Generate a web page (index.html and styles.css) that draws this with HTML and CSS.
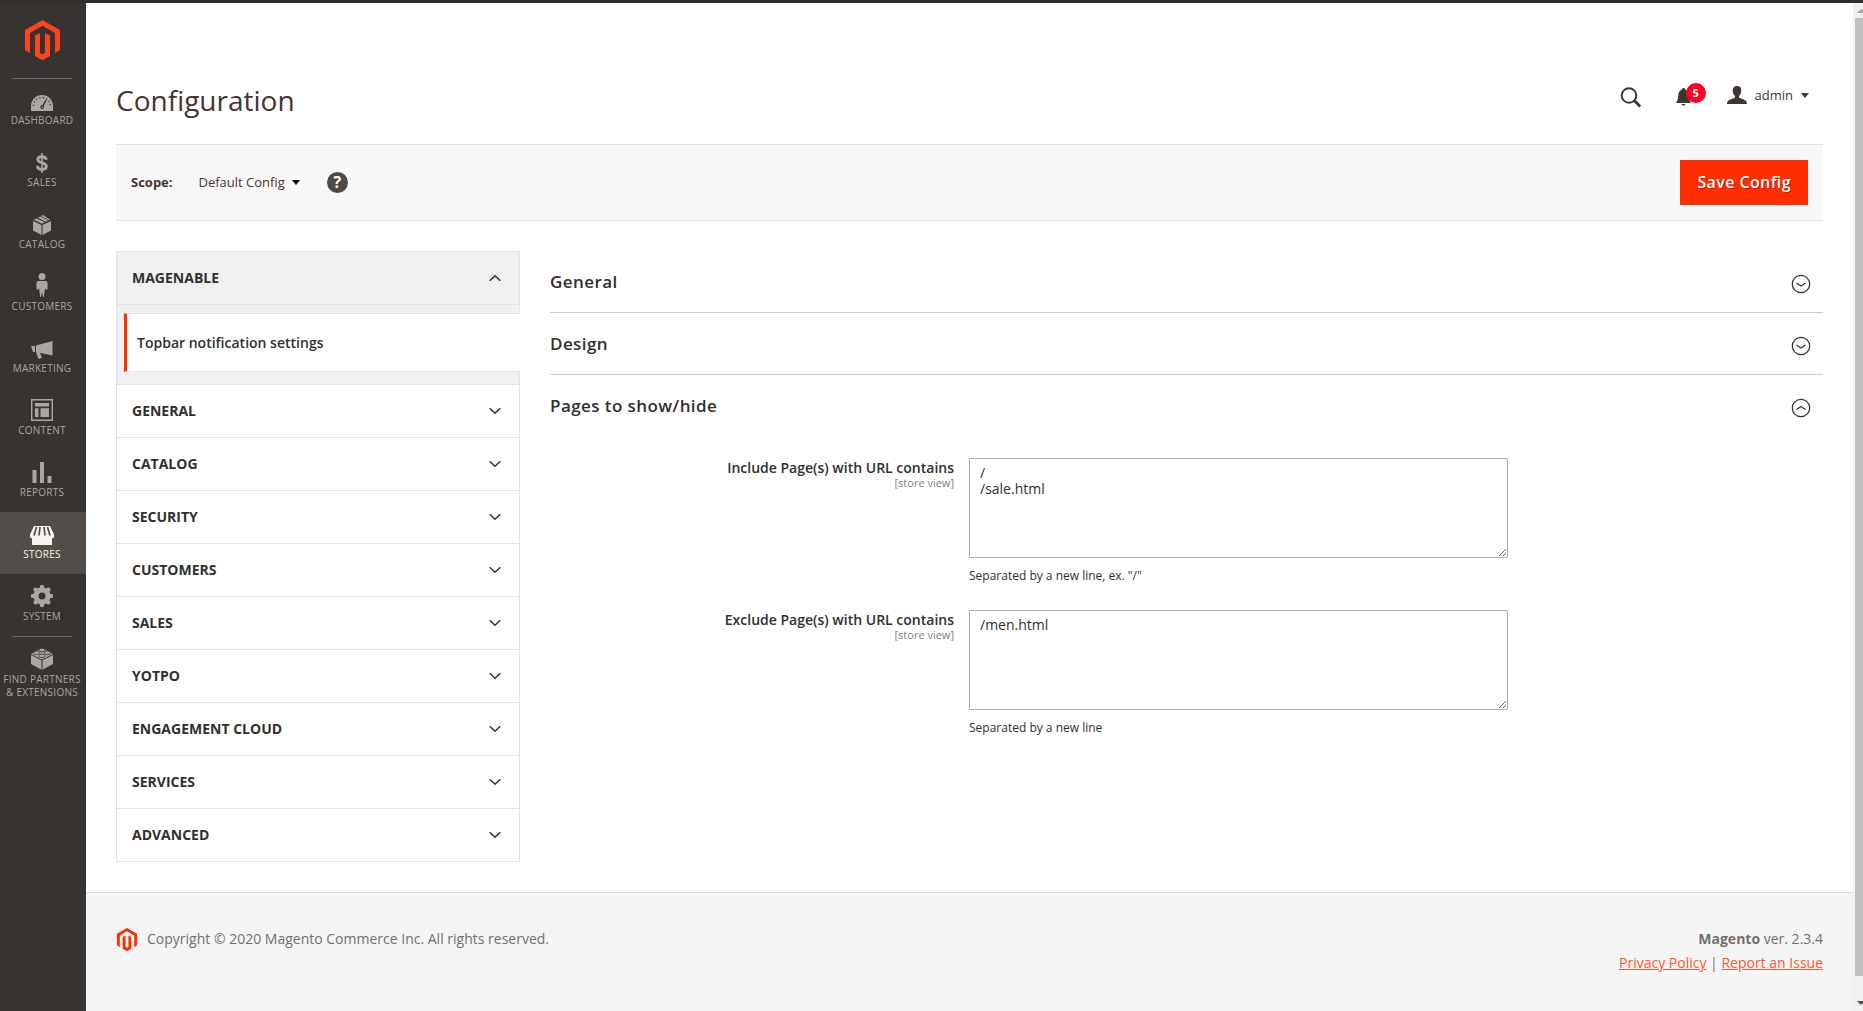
FILE: index.html
```html
<!DOCTYPE html>
<html lang="en">
<head>
<meta charset="utf-8">
<meta name="viewport" content="width=device-width, initial-scale=1">
<title>Configuration / Magento Admin</title>
<link rel="stylesheet" href="styles.css">
</head>
<body>
<svg class="sprite" aria-hidden="true">
  <symbol id="logo" viewBox="0 0 35 40"><path d="M17.5 0 35 10v20l-5 3V13L17.500 5.800 5 13v20l-5-3V10z"/><path d="M10 15.500 15 13v20l2.500 1.500L20 33V13l5 2.500V36l-7.500 4.300L10 36z"/></symbol>
  <symbol id="down" viewBox="0 0 12 6"><path d="M.7.300 6 5.200 11.300.300" fill="none" stroke="currentColor" stroke-width="1.500"/></symbol>
  <symbol id="up" viewBox="0 0 12 6"><path d="M.7 5.700 6 .8l5.300 4.900" fill="none" stroke="currentColor" stroke-width="1.500"/></symbol>
  <symbol id="circle-down" viewBox="0 0 20 20"><g fill="none" stroke="currentColor" stroke-width="1.200"><circle cx="10" cy="10" r="8.700"/><path d="M5.500 9 10 12l4.500-3"/></g></symbol>
  <symbol id="circle-up" viewBox="0 0 20 20"><g fill="none" stroke="currentColor" stroke-width="1.200"><circle cx="10" cy="10" r="8.700"/><path d="M5.500 11.500 10 8.500l4.500 3"/></g></symbol>
</svg>
<div class="app">
  <nav class="menu" aria-label="Main">
    <a class="menu-logo" href="#" aria-label="Magento"><svg width="35" height="40"><use href="#logo"/></svg></a>
    <ul class="menu-list">
      <li><a href="#"><svg width="22" height="16" viewBox="0 0 22 16"><path d="M0 16v-5a11 11 0 0 1 22 0v5z" fill="currentColor"/><g fill="none" stroke="#373330"><path d="M2.500 11a8.500 8.500 0 0 1 17 0" stroke-width="1.400" stroke-dasharray="1.300 2.200"/><path d="m11.500 12 3.500-7" stroke-width="1.500"/></g><circle cx="11.200" cy="12" r="1.900" fill="#373330"/><circle cx="11.200" cy="12" r=".7" fill="currentColor"/></svg><span>Dashboard</span></a></li>
      <li><a href="#"><svg width="12" height="20" viewBox="0 0 12 20"><g fill="none" stroke="currentColor"><path d="M10.300 6.800C10 4.800 8.500 3.700 6 3.700c-2.500 0-4.200 1-4.200 2.900 0 4.200 8.500 2.200 8.500 6.700 0 2-1.800 3.200-4.300 3.200-2.600 0-4.400-1.200-4.600-3.500" stroke-width="2.900"/><path d="M6 0v20" stroke-width="1.600"/></g></svg><span>Sales</span></a></li>
      <li><a href="#"><svg width="18" height="20" viewBox="0 0 18 20"><g fill="currentColor"><path d="m0 6 8.500 4v10L0 15.500zM9.500 10 18 6v9.500L9.500 20zM.8 4.800l2.800-1.400 8.300 3.900L9 8.800zM4.800 2.800 7.300 1.600l8 4-2.300 1.200zM8 1l2-1 7.200 4.800-1 .4z"/></g></svg><span>Catalog</span></a></li>
      <li><a href="#"><svg width="12" height="24" viewBox="0 0 12 24"><g fill="currentColor"><circle cx="6" cy="3.500" r="3.500"/><path d="M2.500 8h7C11 8 11.500 9 11.500 10.500V16L10 17l-1-2-1.200 9H7l-1-5-1 5h-.8L3 15l-1 2-1.500-1v-5.500C.5 9 1 8 2.500 8z"/></g></svg><span>Customers</span></a></li>
      <li><a href="#"><svg width="22" height="18" viewBox="0 0 22 18"><path d="M21.500 0v14.500L11 12.200 9 12l2 5-3.500 1L5 11V4.500zM0 5h4v6H2z" fill="currentColor"/></svg><span>Marketing</span></a></li>
      <li><a href="#"><svg width="22" height="22" viewBox="0 0 22 22"><path d="M.7.700h20.600v20.600H.7z" fill="none" stroke="currentColor" stroke-width="1.400"/><path d="M4 4h14v3.500H4zM4 9.300h3.500V18H4zM9.500 9.300H18V18H9.500z" fill="currentColor"/></svg><span>Content</span></a></li>
      <li><a href="#"><svg width="20" height="21" viewBox="0 0 20 21"><path d="M.5 8h4v13h-4zM8 0h4v21H8zM15.500 14h4v7h-4z" fill="currentColor"/></svg><span>Reports</span></a></li>
      <li><a class="current" href="#"><svg width="24" height="19" viewBox="0 0 24 19"><path d="M2 10h20v9H2z" fill="currentColor"/><path d="M4 0h16l4 8.500A2.500 2.500 0 0 1 19.500 11h-15A2.500 2.500 0 0 1 0 8.500z" fill="currentColor"/><path d="M6.500 1 4 9.500M10 1 9 9.500M14 1l1 8.500M17.500 1 20 9.500" stroke="#524d49" stroke-width="1.700"/></svg><span>Stores</span></a></li>
      <li><a href="#"><svg width="22" height="22" viewBox="-11 -11 22 22"><circle r="6" fill="none" stroke="currentColor" stroke-width="5"/><g fill="currentColor"><path id="tooth" d="M-2.600-7.500-1.500-11h3L2.600-7.500z"/><use href="#tooth" transform="rotate(45)"/><use href="#tooth" transform="rotate(90)"/><use href="#tooth" transform="rotate(135)"/><use href="#tooth" transform="rotate(180)"/><use href="#tooth" transform="rotate(225)"/><use href="#tooth" transform="rotate(270)"/><use href="#tooth" transform="rotate(315)"/></g></svg><span>System</span></a></li>
      <li class="partners"><a href="#"><svg width="22" height="23" viewBox="0 0 22 23"><path d="M0 7 11 1l11 6v10l-11 6-11-6z" fill="currentColor"/><path d="m0 7.500 11 5.500 11-5.500M11 13v10" fill="none" stroke="#373330"/><g fill="currentColor" stroke="#373330" stroke-width=".8"><ellipse cx="11" cy="3" rx="3" ry="1.800"/><ellipse cx="5.500" cy="5.800" rx="3" ry="1.800"/><ellipse cx="16.500" cy="5.800" rx="3" ry="1.800"/><ellipse cx="11" cy="8.800" rx="3" ry="1.800"/></g></svg><span>Find Partners<br>&amp; Extensions</span></a></li>
    </ul>
  </nav>

  <div class="page">
    <header class="page-header">
      <h1>Configuration</h1>
      <div class="header-tools">
        <button class="tool search" aria-label="Search"><svg width="22" height="21" viewBox="0 0 22 21"><g fill="none" stroke="currentColor"><circle cx="9" cy="8.500" r="7.300" stroke-width="2"/><path d="m14.200 13.500 6 6" stroke-width="2.800"/></g></svg></button>
        <button class="tool bell" aria-label="Notifications"><svg width="15" height="18" viewBox="0 0 15 18"><path d="M7.500 0C9 0 9 1 9 1.600c2.800.9 3.600 3 3.800 6.400.2 4 1.200 5 2.200 7H0c1-2 2-3 2.200-7C2.400 4.600 3.200 2.500 6 1.600 6 1 6 0 7.500 0zM5.500 16h4c-.3 2-3.700 2-4 0z" fill="currentColor"/></svg><span class="badge">5</span></button>
        <button class="tool user"><svg width="20" height="18" viewBox="0 0 20 18"><path d="M10 0c3 0 4.500 1.800 4.200 5-.2 2.400-1 4-2.200 5v1.500c2 1.500 8 1.500 8 6.500H0c0-5 6-5 8-6.500V10C6.800 9 6 7.400 5.800 5 5.500 1.800 7 0 10 0z" fill="currentColor"/></svg><span>admin</span><span class="caret"></span></button>
      </div>
    </header>

    <div class="toolbar">
      <strong>Scope:</strong>
      <button class="scope">Default Config<span class="caret"></span></button>
      <button class="help" aria-label="What is this?">?</button>
      <button class="save">Save Config</button>
    </div>

    <div class="columns">
      <nav class="tabs" aria-label="Configuration sections">
        <section class="tab-open">
          <button class="tab">Magenable<svg width="12" height="6"><use href="#up"/></svg></button>
          <a class="tab-item" href="#">Topbar notification settings</a>
        </section>
        <button class="tab">General<svg width="12" height="6"><use href="#down"/></svg></button>
        <button class="tab">Catalog<svg width="12" height="6"><use href="#down"/></svg></button>
        <button class="tab">Security<svg width="12" height="6"><use href="#down"/></svg></button>
        <button class="tab">Customers<svg width="12" height="6"><use href="#down"/></svg></button>
        <button class="tab">Sales<svg width="12" height="6"><use href="#down"/></svg></button>
        <button class="tab">Yotpo<svg width="12" height="6"><use href="#down"/></svg></button>
        <button class="tab">Engagement Cloud<svg width="12" height="6"><use href="#down"/></svg></button>
        <button class="tab">Services<svg width="12" height="6"><use href="#down"/></svg></button>
        <button class="tab">Advanced<svg width="12" height="6"><use href="#down"/></svg></button>
      </nav>

      <main class="sections">
        <button class="section-title">General<svg width="20" height="20"><use href="#circle-down"/></svg></button>
        <button class="section-title">Design<svg width="20" height="20"><use href="#circle-down"/></svg></button>
        <button class="section-title open">Pages to show/hide<svg width="20" height="20"><use href="#circle-up"/></svg></button>
        <form class="fields">
          <div class="field">
            <label for="include">Include Page(s) with URL contains<span>[store view]</span></label>
            <div class="control">
              <textarea id="include" rows="5">/
/sale.html</textarea>
              <p>Separated by a new line, ex. "/"</p>
            </div>
          </div>
          <div class="field">
            <label for="exclude">Exclude Page(s) with URL contains<span>[store view]</span></label>
            <div class="control">
              <textarea id="exclude" rows="5">/men.html</textarea>
              <p>Separated by a new line</p>
            </div>
          </div>
        </form>
      </main>
    </div>

    <footer class="footer">
      <p class="copyright"><svg width="22" height="23"><use href="#logo"/></svg>Copyright © 2020 Magento Commerce Inc. All rights reserved.</p>
      <div class="legal">
        <p><strong>Magento</strong> ver. 2.3.4</p>
        <p><a href="#">Privacy Policy</a> | <a href="#">Report an Issue</a></p>
      </div>
    </footer>
  </div>
  <div class="scrollbar" aria-hidden="true"><span class="arrow-up"></span><span class="thumb"></span><span class="arrow-down"></span></div>
</div>
</body>
</html>
```
FILE: styles.css
```css
* { box-sizing: border-box; }

body {
  margin: 0;
  font: 14px/19px "Open Sans", "Noto Sans", sans-serif;
  color: #303030;
  background: #fff;
}

h1, p, ul { margin: 0; padding: 0; }
ul { list-style: none; }

button {
  margin: 0;
  padding: 0;
  border: 0;
  background: none;
  font: inherit;
  color: inherit;
  cursor: pointer;
}

svg { display: block; flex: none; }
.sprite { position: absolute; width: 0; height: 0; }

.app {
  display: flex;
  min-height: 100vh;
  border-top: 3px solid #2f2f2f;
}

/* Main menu */
.menu {
  flex: 0 0 86px;
  background: #373330;
}

.menu-logo {
  display: flex;
  justify-content: center;
  height: 75px;
  padding: 17px 1px 0 0;
  color: #ff431c;
  fill: currentColor;
}

.menu-list::before,
.partners::before {
  content: "";
  display: block;
  height: 1px;
  margin: 0 14px 0 12px;
  background: #736963;
}

.menu-list::before { margin-bottom: -1px; }

.menu-list a {
  display: flex;
  flex-direction: column;
  align-items: center;
  justify-content: flex-end;
  height: 62px;
  padding: 0 2px 13px 0;
  color: #aaa6a0;
  font-size: 10px;
  letter-spacing: .025em;
  line-height: 13px;
  text-align: center;
  text-decoration: none;
  text-transform: uppercase;
  white-space: nowrap;
}

.menu-list svg { margin-bottom: 3px; }
.menu-list a.current { background: #524d49; color: #f7f3eb; }
.menu-list .partners a { height: 66px; padding-bottom: 4px; }

/* Page */
.page {
  flex: 1;
  display: flex;
  flex-direction: column;
  min-width: 0;
}

.page-header {
  display: flex;
  justify-content: space-between;
  align-items: flex-end;
  height: 141px;
  padding: 0 44px 0 30px;
}

h1 {
  padding-bottom: 25px;
  font-size: 28px;
  font-weight: 400;
  line-height: 38px;
  color: #41362f;
}

.header-tools {
  display: flex;
  align-items: center;
  height: 38px;
  margin-bottom: 30px;
  color: #41362f;
}

.tool { display: flex; align-items: center; }

.search { margin-top: 4px; }
.bell { position: relative; margin: 4px 36px 0 34px; }

.badge {
  position: absolute;
  top: -5px;
  left: 10px;
  width: 20px;
  border-radius: 10px;
  background: #ff0023;
  color: #fff;
  font-size: 11px;
  font-weight: 700;
  line-height: 20px;
}

.user { gap: 8px; font-size: 13px; }

.caret {
  border: 4px solid transparent;
  border-top: 5px solid currentColor;
  border-bottom: 0;
}

.toolbar {
  display: flex;
  align-items: center;
  height: 77px;
  margin: 0 30px;
  padding: 0 15px;
  border: solid #e3e3e3;
  border-width: 1px 0;
  background: #f8f8f8;
  font-size: 13px;
  color: #41362f;
}

.scope {
  display: flex;
  align-items: center;
  gap: 7px;
  margin: 0 27px 0 26px;
}

.scope .caret { color: #000; }

.help {
  width: 21px;
  height: 21px;
  border-radius: 50%;
  background: #514943;
  color: #fff;
  font-size: 16px;
  font-weight: 700;
  line-height: 21px;
}

.save {
  height: 45px;
  margin-left: auto;
  padding: 0 17px;
  background: #ff2d00;
  color: #fff;
  font-size: 16px;
  font-weight: 600;
  letter-spacing: .025em;
  text-shadow: 1px 1px 0 rgba(0, 0, 0, .25);
}

.columns {
  display: flex;
  gap: 30px;
  padding: 30px;
}

/* Section tabs */
.tabs {
  flex: 0 0 404px;
  border: solid #e3e3e3;
  border-width: 0 0 1px 1px;
}

.tab {
  display: flex;
  justify-content: space-between;
  align-items: center;
  width: 100%;
  height: 53px;
  padding: 0 18px 2px 15px;
  border: solid #e3e3e3;
  border-width: 1px 1px 0 0;
  font-weight: 700;
  text-transform: uppercase;
}

.tab svg { margin-top: 2px; }

.tab-open {
  padding-bottom: 12px;
  border-right: 1px solid #e3e3e3;
  background: #f0f0f0;
}

.tab-open .tab {
  margin-bottom: 9px;
  border-right: 0;
  box-shadow: 0 1px #e3e3e3;
}

.tab-item {
  display: block;
  margin: 0 -1px 0 7px;
  padding: 19px 10px;
  border: solid #e3e3e3;
  border-width: 1px 0;
  border-left: 3px solid #ff2d00;
  background: #fff;
  color: #303030;
  font-weight: 600;
  text-decoration: none;
}

/* Settings */
.sections { flex: 1; min-width: 0; }

.section-title {
  display: flex;
  justify-content: space-between;
  align-items: center;
  width: 100%;
  height: 62px;
  padding: 0 12px 0 0;
  border-bottom: 1px solid #ccc;
  font-size: 17px;
  font-weight: 600;
  letter-spacing: .025em;
}

.section-title svg { margin-top: 4px; }
.section-title.open { border-color: transparent; }

.fields {
  display: grid;
  gap: 25px;
  padding-top: 21px;
}

.field {
  display: grid;
  grid-template-columns: 404px minmax(0, 539px);
  gap: 15px;
}

.field label {
  font-weight: 600;
  text-align: right;
}

.field label span {
  display: block;
  color: #808080;
  font-size: 11px;
  font-weight: 400;
  line-height: 12px;
}

textarea {
  display: block;
  width: 100%;
  height: 100px;
  padding: 6px 10px;
  border: 1px solid #adadad;
  border-radius: 1px;
  background: #fff;
  color: #303030;
  font: 14px/16px "Open Sans", "Noto Sans", sans-serif;
}

.control p { padding-top: 8px; font-size: 12px; line-height: 19px; }

/* Footer */
.footer {
  display: flex;
  justify-content: space-between;
  flex: 1;
  padding: 34px 30px;
  border-top: 1px solid #d9d9d9;
  background: #f5f5f5;
  color: #736f6c;
  line-height: 24px;
}

.copyright { display: flex; gap: 9px; }
.copyright svg { margin-top: 1px; fill: #ff2d00; }
.legal { text-align: right; }
.legal a { color: #ff5532; }

/* Scrollbar */
.scrollbar {
  flex: 0 0 10px;
  display: flex;
  flex-direction: column;
  min-width: 0;
  padding-left: 2px;
  overflow: hidden;
  background: #f1f1f1;
}

.thumb { flex: 1; background: #c1c1c1; }

.arrow-up, .arrow-down { height: 15px; overflow: hidden; }
.arrow-down { height: 35px; }

.arrow-up::before, .arrow-down::before {
  content: "";
  display: block;
  width: 0;
  margin: 6px 0 0 2px;
  border: 4px solid transparent;
  border-width: 0 4px 4px;
  border-bottom-color: #a3a3a3;
}

.arrow-down::before {
  margin-top: 25px;
  border-width: 4px 4px 0;
  border-top-color: #505050;
}
```
